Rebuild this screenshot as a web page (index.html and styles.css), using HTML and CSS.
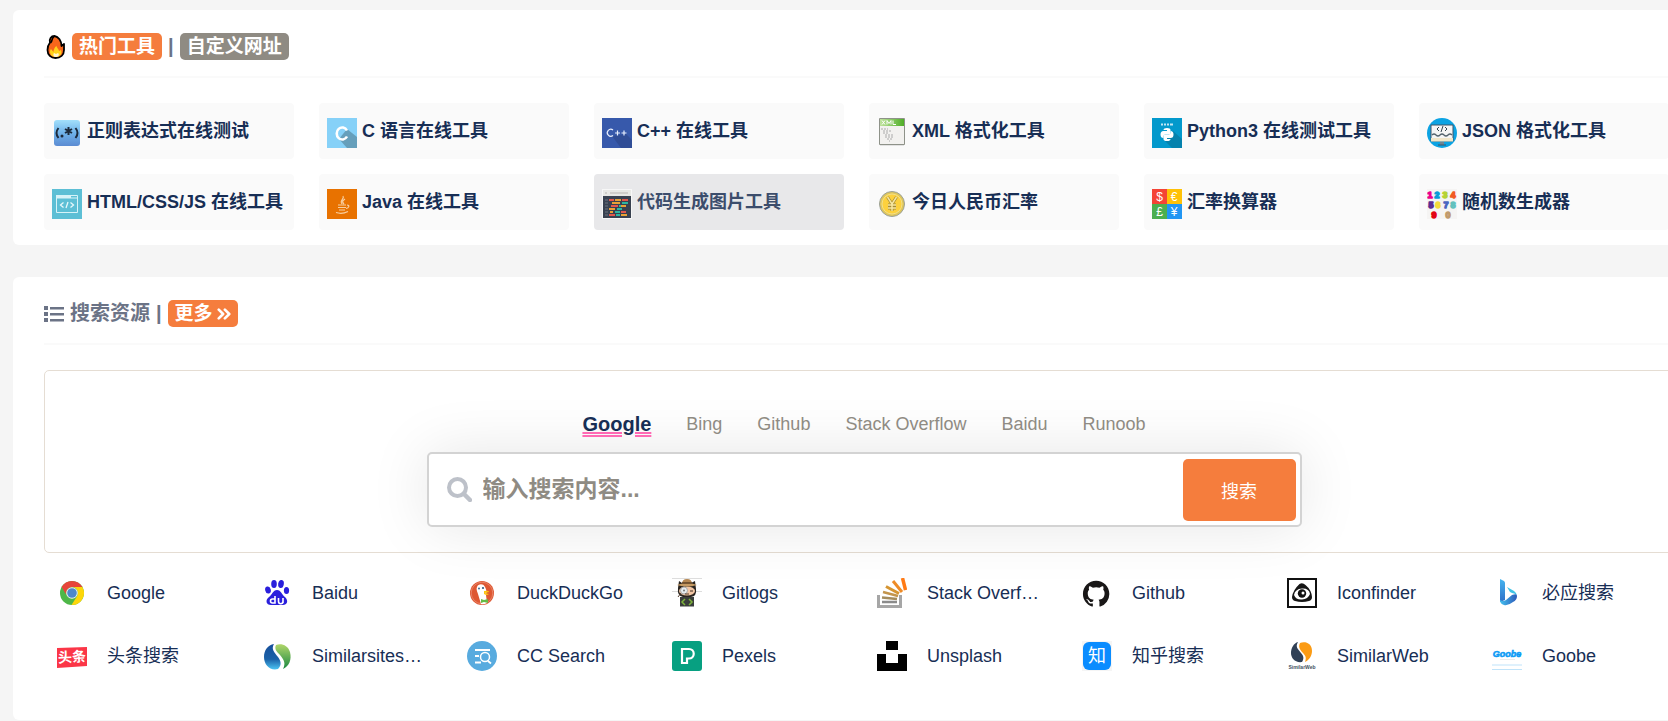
FILE: index.html
```html
<!DOCTYPE html>
<html lang="zh-CN">
<head>
<meta charset="utf-8">
<title>热门工具</title>
<link rel="stylesheet" href="styles.css">
</head>
<body>
<main class="page">
  <section class="card card-tools">
    <h2 class="card-title">
      <svg class="flame" viewBox="0 0 24 24"><path d="M10.500 1C7 1 5 4 6 7.500 4 10 3.500 12 3.500 15c0 5 3.500 8 8 8 5 0 8.500-3 8.500-8V9l-2.500 2c0-5-3-9.500-7-10z" fill="#f8661b" stroke="#000" stroke-width="1.800" stroke-linejoin="round"/><path d="M10 2C7 3 9 6 6.500 8" fill="none" stroke="#000" stroke-width="1.600"/><path d="M12 22c-4 0-6-2.500-6-5 0-1 0-2 1-3l2.500 3c0-2 1-5 3-6 0 2 2.500 3 2.500 5l2-1c1.500 4-1 7-5 7z" fill="#ffd21a"/><path d="M12 22c-3 0-3-2.500-2-4l2 1 2-1c2 2 0 4-2 4z" fill="#fff6cf"/></svg>
      <a class="badge badge-orange" href="#">热门工具</a>
      <span class="bar">|</span>
      <a class="badge badge-gray" href="#">自定义网址</a>
    </h2>
    <div class="tools">
      <a class="tool" href="#"><svg class="icon" viewBox="0 0 30 30"><defs><linearGradient id="rg" x1="0" y1="0" x2="0" y2="1"><stop offset="0" stop-color="#a3e0fb"/><stop offset=".5" stop-color="#6fb2ea"/><stop offset="1" stop-color="#5b8bd2"/></linearGradient></defs><rect x="2" y="2" width="26" height="26" rx="3" fill="url(#rg)"/><path d="M6.500 10q-4 5 0 10M23.500 10q4 5 0 10" fill="none" stroke="#1c2a3c" stroke-width="2"/><circle cx="10" cy="18" r="1.500" fill="#1c2a3c"/><path d="M16.500 9v8M13 11l7 4M20 11l-7 4" stroke="#1c2a3c" stroke-width="2"/></svg><span>正则表达式在线测试</span></a>
      <a class="tool" href="#"><svg class="icon" viewBox="0 0 30 30"><path d="M0 0h30v30H0z" fill="#86d1f8"/><path d="M20 11l10 8v11H20l-8-9z" fill="#669fbb"/><path d="M20 12.500a5.500 6 0 1 0 0 6" fill="none" stroke="#fff" stroke-width="2.600"/></svg><span>C 语言在线工具</span></a>
      <a class="tool" href="#"><svg class="icon" viewBox="0 0 30 30"><path d="M0 0h30v30H0z" fill="#3759ab"/><path d="M10 18l14-2 6 6v8H19z" fill="#304d96"/><path d="M11 12a3.500 3.500 0 1 0 0 5.500M13 15h5M15.500 12.500v5M19.500 15h5M22 12.500v5" fill="none" stroke="#e8eefc" stroke-width="1.200"/></svg><span>C++ 在线工具</span></a>
      <a class="tool" href="#"><svg class="icon" viewBox="0 0 30 30"><defs><linearGradient id="xg"><stop offset="0" stop-color="#bfe39d"/><stop offset="1" stop-color="#4fae27"/></linearGradient></defs><path d="M3 26h24v2H3z" fill="#e2e2e2"/><path d="M2.500.5h25v26h-25z" fill="#f2f1ef" stroke="#8e9289"/><path d="M3 1h24v7H3z" fill="url(#xg)"/><path d="M5 2.500l3 4m0-4l-3 4m5 0v-4l2 3 2-3v4m2-4v4h3" fill="none" stroke="#fff"/><path d="M4 11h7M6 13h8M6 15h6M8 17h8M8 19h9M10 21h5M12 23h1" stroke="#aaa" stroke-dasharray="2 1"/></svg><span>XML 格式化工具</span></a>
      <a class="tool" href="#"><svg class="icon" viewBox="0 0 30 30"><path d="M0 0h30v30H0z" fill="#0399cc"/><path d="M21 13l9 8v9H20l-7-7z" fill="#0582ad"/><path d="M11.500 12q0-2 3.500-2t3.500 2v2.500q0 2-2 2h-3q-2 0-2 2v1.500q-3 0-3-3.500t3-3.500H15v-1z" fill="#fff"/><path d="M18.500 21q0 2-3.500 2t-3.500-2v-2.500q0-2 2-2h3q2 0 2-2V13q3 0 3 3.500t-3 3.500H15v1z" fill="#fff"/><path d="M9 6.500h2m1 0h2m1 0h2m1 0h3" stroke="#bfe6f4" stroke-width="1.800"/></svg><span>Python3 在线测试工具</span></a>
      <a class="tool" href="#"><svg class="icon" viewBox="0 0 30 30"><circle cx="15" cy="15" r="15" fill="#0ca3e3"/><path d="M4 7h22v16H4z" fill="#f5f5f5" stroke="#3d5568"/><path d="M4 20h22v3.500H4z" fill="#f1e6c9"/><path d="M12 9l-2 2 2 2M18 9l2 2-2 2M16 8l-2 6" fill="none" stroke="#33444f"/><path d="M5 17q2-2 4 0t4 0 4 0 4 0 4 0" fill="none" stroke="#55646e" stroke-width="1.300"/><path d="M13 24h4v3h-4z" fill="#6f8593"/><path d="M11 27h8" stroke="#3d5568"/></svg><span>JSON 格式化工具</span></a>
      <a class="tool" href="#"><svg class="icon" viewBox="0 0 30 30"><path d="M0 0h30v30H0z" fill="#5dbfd5"/><path d="M4.500 6.500h21v17h-21zM4 9h22" fill="none" stroke="#d7f3f8"/><path d="M4 6h15v3H4z" fill="#d7f3f8"/><path d="M11.500 13.500l-3 2.500 3 2.500M18.500 13.500l3 2.500-3 2.500M16 13l-2 6" fill="none" stroke="#e6f8fb" stroke-width="1.300"/></svg><span>HTML/CSS/JS 在线工具</span></a>
      <a class="tool" href="#"><svg class="icon" viewBox="0 0 30 30"><path d="M0 0h30v30H0z" fill="#e87200"/><path d="M16 7c2 3-4 4-1 8M18 10c-3 2-3 3-1 5M11 16h8M11 18.500h8M12 21h6M20 16c3 0 2 3-1 3.500M9 23.500q6 2 12-1" fill="none" stroke="#f8cf9f" stroke-width="1.200"/></svg><span>Java 在线工具</span></a>
      <a class="tool tool-active" href="#"><svg class="icon" viewBox="0 0 30 30"><path d="M0 0h30v30H0z" fill="#f7f7f7"/><path d="M1 1h28v6H1z" fill="#e8e8e5"/><path d="M3 4h2m3 0h18" stroke="#d0cecb" stroke-width="2"/><path d="M1 7h28v22H1z" fill="#394150"/><path d="M3 11h3M3 14h3M3 17h3M3 20h3M3 23h3M3 26h3" stroke="#6c7480"/><path d="M7 11h5m8 0h6M9 17h7m3 6h5M7 26h6" stroke="#e2574c" stroke-width="2"/><path d="M13 11h6m-9 3h8m-11 6h6m5-3h6M8 23h3m8 3h6" stroke="#e8a135" stroke-width="2"/><path d="M20 14h6m-9 3h2m-4 3h5m-7 3h5m-4 3h4" stroke="#2eb5a0" stroke-width="2"/></svg><span>代码生成图片工具</span></a>
      <a class="tool" href="#"><svg class="icon" viewBox="0 0 30 30"><circle cx="15" cy="15" r="12.500" fill="#dfc65a" stroke="#9aa09a"/><circle cx="15" cy="15" r="10" fill="#fdd13d" stroke="#f3e08a"/><path d="M10.500 8l4.500 7 4.500-7M15 15v7M11 16h8M11 19h8" fill="none" stroke="#a48b36" stroke-width="3"/><path d="M10.500 8l4.500 7 4.500-7M15 15v7M11 16h8M11 19h8" fill="none" stroke="#f7e7a0" stroke-width="1.500"/></svg><span>今日人民币汇率</span></a>
      <a class="tool" href="#"><svg class="icon" viewBox="0 0 30 30"><path d="M0 0h15v15H0z" fill="#f44336"/><path d="M15 0h15v15H15z" fill="#ffc107"/><path d="M0 15h15v15H0z" fill="#4caf50"/><path d="M15 15h15v15H15z" fill="#2196f3"/><g class="glyphs light" fill="#fff" font-size="12"><text x="7.500" y="12">$</text><text x="22" y="12">€</text><text x="7.500" y="26.500">£</text><text x="22" y="26.500">¥</text></g></svg><span>汇率换算器</span></a>
      <a class="tool" href="#"><svg class="icon" viewBox="0 0 30 30"><path d="M0 0h30v30H0z" fill="#f5f4f3"/><g class="glyphs heavy chunky" font-size="9"><text x="3" y="8.500" fill="#ec008c" stroke="#ec008c">1</text><text x="10" y="8.500" fill="#0b9bd8" stroke="#0b9bd8">2</text><text x="18" y="8.500" fill="#b5d334" stroke="#b5d334">3</text><text x="26" y="8.500" fill="#f15a24" stroke="#f15a24">4</text><text x="4" y="18.800" fill="#5b2d91" stroke="#5b2d91">5</text><text x="11" y="18.800" fill="#f5dc3c" stroke="#f5dc3c">6</text><text x="19" y="18.800" fill="#4c66c0" stroke="#4c66c0">7</text><text x="26" y="18.800" fill="#63c1bd" stroke="#63c1bd">8</text><text x="7" y="29" fill="#e30613" stroke="#e30613">9</text><text x="21" y="29" fill="#c09a6b" stroke="#c09a6b">0</text></g></svg><span>随机数生成器</span></a>
    </div>
  </section>

  <section class="card card-search">
    <h2 class="card-title">
      <svg class="list-icon" viewBox="0 0 20 18"><path d="M0 1h4v4H0zM0 7h4v4H0zM0 13h4v4H0zM6 2h14v2.500H6zM6 8h14v2.500H6zM6 14h14v2.500H6z" fill="#6b7386"/></svg>
      <span class="title-text">搜索资源</span>
      <span class="bar">|</span>
      <a class="badge badge-orange" href="#">更多<svg class="chevrons" viewBox="0 0 16 14"><path d="M2 2l5 5-5 5M9 2l5 5-5 5" fill="none" stroke="#fff" stroke-width="3" stroke-linecap="round" stroke-linejoin="round"/></svg></a>
    </h2>
    <div class="search-panel">
      <div class="tabs">
        <button class="tab tab-active" type="button">Google</button>
        <button class="tab" type="button">Bing</button>
        <button class="tab" type="button">Github</button>
        <button class="tab" type="button">Stack Overflow</button>
        <button class="tab" type="button">Baidu</button>
        <button class="tab" type="button">Runoob</button>
      </div>
      <form class="search">
        <label class="search-label" for="q" aria-label="搜索"><svg class="search-icon" viewBox="0 0 25 25"><circle cx="10.500" cy="10.500" r="8.500" fill="none" stroke="#bdc1c9" stroke-width="4"/><path d="M17 17l6 6" stroke="#bdc1c9" stroke-width="4.500" stroke-linecap="round"/></svg></label>
        <input class="search-input" id="q" type="text" placeholder="输入搜索内容...">
        <button class="search-button" type="submit">搜索</button>
      </form>
    </div>
    <div class="links">
      <a class="link" href="#"><svg class="icon" viewBox="0 0 30 30"><circle cx="15" cy="15" r="12" fill="#4eb748"/><path d="M4.600 9A12 12 0 0 1 25.400 9H15a6 6 0 0 0-5.500 8z" fill="#e7453a"/><path d="M15 9h10.400A12 12 0 0 1 14.500 27l5.700-9A6 6 0 0 0 15 9z" fill="#fdd60a"/><circle cx="15" cy="15" r="5.800" fill="#f4f6ee"/><circle cx="15" cy="15" r="4.800" fill="#4b88cb"/></svg><span class="link-text">Google</span></a>
      <a class="link" href="#"><svg class="icon" viewBox="0 0 30 30"><g fill="#2a1fdc"><ellipse cx="6" cy="12" rx="2.800" ry="3.600" transform="rotate(-15 6 12)"/><ellipse cx="12" cy="6" rx="2.800" ry="4"/><ellipse cx="19" cy="6" rx="2.800" ry="4" transform="rotate(10 19 6)"/><ellipse cx="24.500" cy="12.500" rx="2.600" ry="3.500"/><path d="M15 12c4 0 5 5 8 7 4 4 2 8-2 8H9c-5 0-6-5-2-8 3-2 4-7 8-7z"/></g><path d="M13 18v7h-2.500a2 2 0 0 1 0-4H13M16.500 20v3.500a2 2 0 0 0 4.500 0V20m0 0v5" fill="none" stroke="#fff" stroke-width="1.600"/></svg><span class="link-text">Baidu</span></a>
      <a class="link" href="#"><svg class="icon" viewBox="0 0 30 30"><circle cx="15" cy="15" r="12" fill="#de5833"/><circle cx="15" cy="15" r="10.800" fill="none" stroke="#eb8f75" stroke-width=".8"/><path d="M10 9c1-3 6-4 8 0 1 2 2 4 1 8l1 8q-4 2-6 1L11 16c-1-3-2-5-1-7z" fill="#fff"/><path d="M17 13q5-1 5 1l-4 1 4 1q-2 2-5 0z" fill="#fdc20f"/><circle cx="16" cy="10" r="1.100" fill="#2b5a83"/><circle cx="12" cy="10.500" r=".9" fill="#2b5a83"/><path d="M14 21l3 1 4-1v4l-4-1-3 1z" fill="#65bc46"/></svg><span class="link-text">DuckDuckGo</span></a>
      <a class="link" href="#"><svg class="icon" viewBox="0 0 30 30"><path d="M0 .5h30M0 13.500h30" stroke="#ddd"/><path d="M6 10l1-7 3 2h9l4-2 1 8q1 7-5 8h-8q-6-1-5-9z" fill="#29241f"/><ellipse cx="15" cy="13" rx="8" ry="4.500" fill="#f3c7a5"/><path d="M10 6q0-5 5-5t5 5z" fill="#b58752"/><path d="M5 7q10-4 20 0-10 3-20 0z" fill="#c69a62"/><path d="M10 5h10" stroke="#5d4025" stroke-width="1.500"/><circle cx="12" cy="12.500" r="3.500" fill="#e8edf0" stroke="#aaa"/><circle cx="12" cy="12.500" r="1" fill="#777"/><path d="M18 13h3" stroke="#3e2c22"/><path d="M9 15l-3 4M13 16h4" stroke="#553f31"/><path d="M8 19h14v9.500H8z" fill="#3a3e3b"/><path d="M13 21l-3 3 3 3M17 21l3 3-3 3" fill="none" stroke="#7db23b" stroke-width="1.500"/></svg><span class="link-text">Gitlogs</span></a>
      <a class="link" href="#"><svg class="icon" viewBox="0 0 30 30"><path d="M1.500 17v11.500h22V17" fill="none" stroke="#a6a6a6" stroke-width="3"/><path d="M5 24h15" stroke="#8b8b8b" stroke-width="2.500"/><path d="M5 19.500l15 1.500" stroke="#a48c5d" stroke-width="2.500"/><path d="M6 14l15 4" stroke="#c3954c" stroke-width="2.500"/><path d="M9 8.500l13 7" stroke="#d59532" stroke-width="3"/><path d="M16 3l9 11" stroke="#ee8b26" stroke-width="3"/><path d="M25.500 0l3 12" stroke="#ff7a15" stroke-width="3.500"/></svg><span class="link-text">Stack Overflow</span></a>
      <a class="link" href="#"><svg class="icon" viewBox="0 0 16 16"><path transform="translate(.5 1.500) scale(.88)" fill="#191717" d="M8 0C3.580 0 0 3.580 0 8c0 3.540 2.290 6.530 5.470 7.590.4.070.55-.17.55-.38 0-.19-.01-.82-.01-1.490-2.010.37-2.530-.49-2.690-.94-.09-.23-.48-.94-.82-1.130-.28-.15-.68-.52-.01-.53.63-.01 1.080.58 1.230.82.72 1.210 1.870.87 2.330.66.07-.52.28-.87.51-1.070-1.780-.2-3.640-.89-3.640-3.950 0-.87.31-1.590.82-2.150-.08-.2-.36-1.020.08-2.120 0 0 .67-.21 2.200.82a7.600 7.600 0 0 1 4 0c1.530-1.040 2.200-.82 2.200-.82.44 1.100.16 1.920.08 2.120.51.56.82 1.270.82 2.150 0 3.070-1.870 3.750-3.650 3.950.29.25.54.73.54 1.480 0 1.070-.01 1.930-.01 2.200 0 .21.15.46.55.38A8 8 0 0 0 16 8c0-4.420-3.580-8-8-8z"/></svg><span class="link-text">Github</span></a>
      <a class="link" href="#"><svg class="icon" viewBox="0 0 30 30"><path d="M1 1h28v28H1z" fill="#fff" stroke="#111" stroke-width="2"/><path d="M12.500 6q3-2 6 1 6 5 6.500 12 0 3-3 4-7 2-14 0-3-1-3-4 1-7 7.500-13z" fill="#151515"/><path d="M7 17q1-6 8-6.500T23 16q-2 5-8 5.500T7 17z" fill="#fff"/><circle cx="15" cy="15.500" r="4.200" fill="#111"/><circle cx="16" cy="15" r="1.500" fill="#fff"/></svg><span class="link-text">Iconfinder</span></a>
      <a class="link" href="#"><svg class="icon" viewBox="0 0 30 30"><defs><linearGradient id="bg" x1="0" y1="0" x2="0" y2="1"><stop offset="0" stop-color="#44b5f0"/><stop offset="1" stop-color="#2f6fc7"/></linearGradient><linearGradient id="bh"><stop offset="0" stop-color="#43c0ee"/><stop offset="1" stop-color="#2c59b9"/></linearGradient></defs><path d="M8 1l4 2q1 1 1 2v17l-5 2z" fill="url(#bg)"/><path d="M15 9l7 4q3 2 3 5-2-3-5-3l-2-1z" fill="#3ec3e6"/><path d="M8 22q3 2 6 0l6-5q5-2 5 1 0 4-4 6-5 4-9 3-4-1-4-5z" fill="url(#bh)"/></svg><span class="link-text">必应搜索</span></a>
      <a class="link" href="#"><svg class="icon" viewBox="0 0 30 30"><path d="M0 7l30-1v19L0 27z" fill="#fb3647"/><g class="glyphs heavy" fill="#fff" font-size="14" transform="rotate(-3 15 16)"><text x="15" y="21">头条</text></g></svg><span class="link-text">头条搜索</span></a>
      <a class="link" href="#"><svg class="icon" viewBox="0 0 30 30"><defs><linearGradient id="sb" x1="0" y1="0" x2="0" y2="1"><stop offset="0" stop-color="#164e9a"/><stop offset=".6" stop-color="#1b62a8"/><stop offset="1" stop-color="#4cc4f3"/></linearGradient><linearGradient id="sg" x1="0" y1="0" x2="0" y2="1"><stop offset="0" stop-color="#b0d66a"/><stop offset="1" stop-color="#1a8841"/></linearGradient></defs><path d="M12 3c-3 5 0 8 4 13 3 4 4 8 0 12C8 30 2 24 2 16 2 9 6 4 12 3z" fill="url(#sb)"/><path d="M14 4c5-2 12 0 14 7 2 8-1 14-7 17 3-6 1-9-3-14-3-3-6-6-4-10z" fill="url(#sg)"/></svg><span class="link-text">Similarsites搜索</span></a>
      <a class="link" href="#"><svg class="icon" viewBox="0 0 30 30"><circle cx="15" cy="15" r="15" fill="#58abdf"/><path d="M8 9h15M8 15h4M8 21.500h6M21 20l3 2.500" stroke="#fff" stroke-width="1.800"/><circle cx="18" cy="16" r="4.500" fill="none" stroke="#fff" stroke-width="1.500"/></svg><span class="link-text">CC Search</span></a>
      <a class="link" href="#"><svg class="icon" viewBox="0 0 30 30"><rect width="30" height="30" rx="3" fill="#07a081"/><path d="M10 8h7a4.500 4.500 0 0 1 0 9.500h-2V22h-5z" fill="none" stroke="#fff" stroke-width="2.200"/></svg><span class="link-text">Pexels</span></a>
      <a class="link" href="#"><svg class="icon" viewBox="0 0 30 30"><path d="M9 0h12v9H9zM0 13h9v9h12v-9h9v17H0z"/></svg><span class="link-text">Unsplash</span></a>
      <a class="link" href="#"><svg class="icon" viewBox="0 0 30 30"><path d="M0 0h30v30H0z" fill="#f5f5f5"/><rect x="1" y="1" width="28" height="28" rx="6" fill="#0a8cff"/><g class="glyphs" fill="#fff" font-size="18"><text x="15" y="21">知</text></g></svg><span class="link-text">知乎搜索</span></a>
      <a class="link" href="#"><svg class="icon" viewBox="0 0 30 30"><path d="M11 1c-3 5 0 7 3 11 3 3 3 6 1 9C8 22 4 17 4 12 4 7 7 2 11 1z" fill="#304056"/><path d="M13 2c5-2 12 0 12 8 0 5-3 9-7 11 2-5 0-7-3-10-2-3-4-5-2-9z" fill="#fb9b14"/><g class="glyphs heavy" fill="#45505f" font-size="5"><text x="15" y="28">SimilarWeb</text></g></svg><span class="link-text">SimilarWeb</span></a>
      <a class="link" href="#"><svg class="icon" viewBox="0 0 30 30"><g class="glyphs heavy" fill="#0c9bf5" stroke="#0c9bf5" stroke-width=".6" font-size="9" font-style="italic"><text x="15" y="16">Goobe</text></g><path d="M8 18.500h15" stroke="#ececec"/><path d="M0 24h30M0 28.500h30" stroke="#bfe3fa"/></svg><span class="link-text">Goobe</span></a>
    </div>
  </section>
</main>
</body>
</html>
```
FILE: styles.css
```css
* {
  box-sizing: border-box;
}

html {
  overflow: hidden;
}

body {
  margin: 0;
  background: #f5f5f5;
  color: #172e55;
  font-family: "Liberation Sans", "Noto Sans CJK SC", sans-serif;
  font-size: 18px;
}

a {
  color: inherit;
  text-decoration: none;
}

button,
input {
  font-family: inherit;
}

/* The board is wider than the window and runs off its right edge. */
.page {
  display: flex;
  flex-direction: column;
  gap: 32px;
  margin-right: -47px;
  padding: 10px 0 0 13px;
}

.card {
  padding: 23px 31px 0;
  border-radius: 6px;
  background: #fff;
}

.card-tools {
  padding-bottom: 15px;
}

.card-search {
  padding-bottom: 33px;
}

.card-title {
  display: flex;
  align-items: center;
  height: 45px;
  margin: 0 0 25px;
  padding-bottom: 16px;
  border-bottom: 2px solid #fafafa;
  color: #6b7386;
  font-size: 20px;
  line-height: 27px;
}

.flame {
  width: 24px;
  height: 24px;
  margin-right: 4px;
}

.list-icon {
  width: 20px;
  height: 18px;
  margin-right: 6px;
}

.bar {
  padding: 0 6px;
}

.badge {
  display: flex;
  align-items: center;
  gap: 4px;
  height: 27px;
  padding: 0 7px;
  border-radius: 5px;
  color: #fff;
  font-size: 19px;
}

.badge-orange {
  background: #f57d3d;
}

.badge-gray {
  background: #8f8b83;
}

.chevrons {
  width: 14px;
  height: 14px;
}

.tools {
  display: grid;
  grid-template-columns: repeat(6, 1fr);
  gap: 15px 25px;
  margin-right: 15px;
}

.tool {
  display: flex;
  align-items: center;
  gap: 5px;
  height: 56px;
  padding: 0 8px;
  border-radius: 4px;
  background: #fafafa;
  font-weight: 700;
  line-height: 28px;
  white-space: nowrap;
}

.tool-active {
  background: #e8e8ea;
  color: #3c4d6c;
}

.icon {
  flex: none;
  width: 30px;
  height: 30px;
}

.tool .icon {
  margin-top: 4px;
}

.glyphs {
  text-anchor: middle;
}

.light {
  font-weight: 400;
}

.heavy {
  font-weight: 700;
}

.chunky {
  stroke-width: 1.4px;
  stroke-linejoin: round;
}

.search-panel {
  display: flex;
  flex-direction: column;
  align-items: center;
  gap: 14px;
  padding: 39px 0 25px;
  border: 1px solid #e5ddd3;
  border-radius: 5px;
}

.tabs {
  display: flex;
  align-items: center;
  gap: 35px;
  height: 28px;
}

.tab {
  position: relative;
  z-index: 1;
  padding: 0;
  border: 0;
  background: none;
  color: #8f8b83;
  font-size: 18px;
  line-height: 28px;
}

.tab-active {
  color: #172e55;
  font-size: 20px;
  font-weight: 700;
  text-decoration: underline double #ff69b4 2px;
}

.search {
  display: flex;
  align-items: center;
  width: 875px;
  max-width: 100%;
  height: 75px;
  padding: 4px;
  border: 2px solid #d3d3d3;
  border-radius: 5px;
  background: #fff;
  box-shadow: 0 0 60px rgba(0, 0, 0, 0.1);
}

.search-label {
  display: flex;
  padding: 0 11px 0 14px;
}

.search-icon {
  width: 25px;
  height: 25px;
}

.search-input {
  flex: 1;
  min-width: 0;
  height: 60px;
  padding: 0;
  border: 0;
  outline: 0;
  background: none;
  color: #172e55;
  font-size: 23px;
  font-weight: 700;
}

.search-input::placeholder {
  color: #8f8b83;
}

.search-button {
  width: 113px;
  height: 62px;
  border: 0;
  border-radius: 5px;
  background: #f57d3d;
  color: #fff;
  font-size: 18px;
}

.links {
  display: grid;
  grid-template-columns: repeat(8, 1fr);
  grid-auto-rows: 63px;
  padding-top: 8px;
}

.link {
  display: flex;
  align-items: center;
  gap: 20px;
  padding-left: 13px;
}

.link-text {
  width: 113px;
  padding-top: 2px;
  overflow: hidden;
  line-height: 27px;
  text-overflow: ellipsis;
  white-space: nowrap;
}
```
